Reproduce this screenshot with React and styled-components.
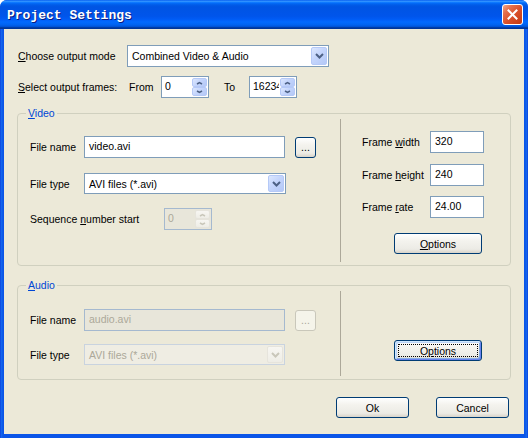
import React from 'react';
import styled, { createGlobalStyle } from 'styled-components';

const Global = createGlobalStyle`
  html, body { margin: 0; padding: 0; background: #ffffff; }
  body { font-family: "Liberation Sans", Arial, sans-serif; font-size: 10.5px; color: #000; }
  * { box-sizing: border-box; }
`;

const Window = styled.div`
  width: 528px;
  height: 438px;
  display: flex;
  flex-direction: column;
  border-radius: 7px 7px 0 0;
  overflow: hidden;
  background: #0A4BDF;
`;

const TitleBar = styled.div`
  height: 29px;
  flex: none;
  display: flex;
  align-items: center;
  justify-content: space-between;
  padding: 1px 5px 0 7px;
  background: linear-gradient(180deg, #0058EE 0%, #3593FF 4%, #288EFF 6%, #127DFF 8%, #036FFC 10%, #0262EE 14%, #0057E5 20%, #0054E3 24%, #0055EB 56%, #005BF5 66%, #026AFE 76%, #0062EF 86%, #0052D6 92%, #0040AB 94%, #003092 100%);
`;

const Title = styled.div`
  font-family: "Liberation Mono", "Courier New", monospace;
  font-weight: bold;
  font-size: 13px;
  color: #ffffff;
  text-shadow: 1px 1px #0A1C80;
`;

const CloseButton = styled.div`
  width: 21px;
  height: 21px;
  margin-top: -1px;
  border: 1px solid #ffffff;
  border-radius: 3px;
  display: flex;
  align-items: center;
  justify-content: center;
  background: linear-gradient(135deg, #F3A88A 0%, #E5704C 25%, #D9502A 55%, #C43A12 100%);
`;

const Frame = styled.div`
  flex: 1;
  display: flex;
  padding: 0 4px 4px;
  background: linear-gradient(90deg, #0831D9 0px, #166AEE 1px, #0A55E8 3px, #0A55E8 calc(100% - 3px), #166AEE calc(100% - 1px), #0831D9 100%);
`;

const Client = styled.div`
  flex: 1;
  display: flex;
  flex-direction: column;
  padding: 16px 13px 0 13px;
  background: #ECE9D8;
`;

const Row = styled.div`
  display: flex;
  align-items: center;
  height: ${p => p.$h || 22}px;
  margin-top: ${p => p.$mt || 0}px;
  padding-left: ${p => p.$pl || 0}px;
`;

const Label = styled.div`
  width: ${p => p.$w}px;
  margin-left: ${p => p.$ml || 0}px;
  flex: none;
  white-space: nowrap;
  color: ${p => (p.$disabled ? '#ACA899' : '#000')};
`;

const U = styled.span`
  text-decoration: underline;
  text-underline-offset: 1px;
`;

const TextField = styled.div`
  width: ${p => p.$w}px;
  height: 22px;
  flex: none;
  padding: 0 3px 2px 4px;
  display: flex;
  align-items: center;
  white-space: nowrap;
  overflow: hidden;
  border: 1px solid ${p => (p.$disabled ? '#A5B9CF' : '#7F9DB9')};
  background: ${p => (p.$disabled ? '#E8E6DA' : '#ffffff')};
  color: ${p => (p.$disabled ? '#ACA899' : '#000')};
`;

const ComboBox = styled.div`
  width: ${p => p.$w}px;
  height: ${p => p.$h || 21}px;
  flex: none;
  display: flex;
  border: 1px solid ${p => (p.$disabled ? '#C9D3DF' : '#7F9DB9')};
  background: ${p => (p.$disabled ? '#EFEDE3' : '#ffffff')};
`;

const ComboText = styled.div`
  flex: 1;
  display: flex;
  align-items: center;
  padding-left: 4px;
  white-space: nowrap;
  color: ${p => (p.$disabled ? '#ACA899' : '#000')};
`;

const DropButton = styled.div`
  width: 16px;
  margin: 1px;
  display: flex;
  align-items: center;
  justify-content: center;
  border-radius: 2px;
  border: 1px solid ${p => (p.$disabled ? '#E6E4DC' : '#B5C9F7')};
  background: ${p => (p.$disabled
    ? 'linear-gradient(180deg, #F7F6F2 0%, #EEEDE6 100%)'
    : 'linear-gradient(135deg, #DCE7FE 0%, #C4D5FC 45%, #B4C8F6 100%)')};
`;

const Spin = styled.div`
  width: ${p => p.$w}px;
  height: 22px;
  flex: none;
  display: flex;
  border: 1px solid ${p => (p.$disabled ? '#A5B9CF' : '#7F9DB9')};
  background: ${p => (p.$disabled ? '#E8E6DA' : '#ffffff')};
`;

const SpinText = styled.div`
  flex: 1;
  min-width: 0;
  overflow: hidden;
  white-space: nowrap;
  padding: 0 0 2px 3px;
  display: flex;
  align-items: center;
  color: ${p => (p.$disabled ? '#ACA899' : '#000')};
`;

const SpinButtons = styled.div`
  width: 15px;
  flex: none;
  margin: 1px;
  display: flex;
  flex-direction: column;
`;

const SpinButton = styled.div`
  flex: 1;
  display: flex;
  align-items: center;
  justify-content: center;
  border-radius: 2px;
  border: 1px solid ${p => (p.$disabled ? '#E6E4DC' : '#B5C9F7')};
  background: ${p => (p.$disabled
    ? 'linear-gradient(180deg, #F7F6F2 0%, #EEEDE6 100%)'
    : 'linear-gradient(135deg, #DCE7FE 0%, #C4D5FC 45%, #B4C8F6 100%)')};
`;

const Button = styled.div`
  width: ${p => p.$w}px;
  height: 21px;
  flex: none;
  margin-left: ${p => p.$ml || 0}px;
  display: flex;
  align-items: center;
  justify-content: center;
  padding: ${p => (p.$focused ? '3px' : '0')};
  border: 1px solid ${p => (p.$disabled ? '#C9C7BA' : '#003C74')};
  border-radius: 3px;
  color: ${p => (p.$disabled ? '#ACA899' : '#000')};
  background: ${p => (p.$disabled
    ? '#F5F4EA'
    : 'linear-gradient(180deg, #FFFFFF 0%, #F4F3EE 35%, #ECEBE5 80%, #D8D3C9 100%)')};
  box-shadow: ${p => (p.$focused
    ? 'inset 1px 1px #CEE7FF, inset -1px -1px #6982EE, inset 2px 2px #BCD4F6, inset -2px -2px #89ADE4'
    : 'none')};
`;

const FocusRect = styled.div`
  flex: 1;
  align-self: stretch;
  display: flex;
  align-items: center;
  justify-content: center;
  outline: 1px dotted #000;
  outline-offset: -1px;
`;

const Group = styled.fieldset`
  margin: ${p => p.$mt}px 0 0;
  padding: 0;
  min-width: 0;
  border: 1px solid #D0D0BF;
  border-radius: 4px;
`;

const Legend = styled.legend`
  margin-left: 8px;
  padding: 0 2px;
  line-height: 12px;
  font-size: 10.5px;
  color: #0046D5;
`;

const GroupBody = styled.div`
  height: ${p => p.$h}px;
  display: grid;
  grid-template-columns: ${p => p.$cols};
`;

const Column = styled.div`
  display: flex;
  flex-direction: column;
  padding: ${p => p.$pad};
`;

const Separator = styled.div`
  margin: 0 0 3px;
  background: #ACA899;
`;

const ActionBar = styled.div`
  display: flex;
  justify-content: flex-end;
  gap: 27px;
  margin-top: 17px;
  padding-right: 2px;
`;

const Chevron = ({ up, color = '#4D6185', w = 9, h = 6, sw = 2 }) => (
  <svg width={w} height={h} viewBox={`0 0 ${w} ${h}`}>
    <polyline
      points={up ? `1,${h - 1} ${w / 2},1.5 ${w - 1},${h - 1}` : `1,1 ${w / 2},${h - 1.5} ${w - 1},1`}
      fill="none"
      stroke={color}
      strokeWidth={sw}
    />
  </svg>
);

const Combo = ({ w, h, value, disabled }) => (
  <ComboBox $w={w} $h={h} $disabled={disabled}>
    <ComboText $disabled={disabled}>{value}</ComboText>
    <DropButton $disabled={disabled}>
      <Chevron color={disabled ? '#C9C7BA' : '#4D6185'} />
    </DropButton>
  </ComboBox>
);

const SpinBox = ({ w, value, disabled }) => (
  <Spin $w={w} $disabled={disabled}>
    <SpinText $disabled={disabled}>{value}</SpinText>
    <SpinButtons>
      <SpinButton $disabled={disabled}>
        <Chevron up w={7} h={4} sw={1.5} color={disabled ? '#C9C7BA' : '#4D6185'} />
      </SpinButton>
      <SpinButton $disabled={disabled}>
        <Chevron w={7} h={4} sw={1.5} color={disabled ? '#C9C7BA' : '#4D6185'} />
      </SpinButton>
    </SpinButtons>
  </Spin>
);

export default function App() {
  return (
    <>
      <Global />
      <Window>
        <TitleBar>
          <Title>Project Settings</Title>
          <CloseButton>
            <svg width="11" height="11" viewBox="0 0 11 11">
              <path d="M1.5 1.5 L9.5 9.5 M9.5 1.5 L1.5 9.5" stroke="#fff" strokeWidth="2" strokeLinecap="square" />
            </svg>
          </CloseButton>
        </TitleBar>
        <Frame>
          <Client>
            <Row $pl={1}>
              <Label $w={109}><U>C</U>hoose output mode</Label>
              <Combo w={202} h={22} value="Combined Video & Audio" />
            </Row>
            <Row $pl={1} $mt={9}>
              <Label $w={111}><U>S</U>elect output frames:</Label>
              <Label $w={32}>From</Label>
              <SpinBox w={48} value="0" />
              <Label $w={25} $ml={15}>To</Label>
              <SpinBox w={48} value="16234" />
            </Row>

            <Group $mt={9}>
              <Legend><U>V</U>ideo</Legend>
              <GroupBody $h={146} $cols="322px 1px 1fr">
                <Column $pad="17px 0 0 12px">
                  <Row>
                    <Label $w={54}>File name</Label>
                    <TextField $w={201}>video.avi</TextField>
                    <Button $w={21} $ml={10}>...</Button>
                  </Row>
                  <Row $mt={15} $h={21}>
                    <Label $w={54}>File type</Label>
                    <Combo w={202} value="AVI files (*.avi)" />
                  </Row>
                  <Row $mt={14}>
                    <Label $w={134}>Sequence <U>n</U>umber start</Label>
                    <SpinBox w={48} value="0" disabled />
                  </Row>
                </Column>
                <Separator />
                <Column $pad="12px 26px 0 21px">
                  <Row>
                    <Label $w={68}>Frame <U>w</U>idth</Label>
                    <TextField $w={54}>320</TextField>
                  </Row>
                  <Row $mt={11}>
                    <Label $w={68}>Frame <U>h</U>eight</Label>
                    <TextField $w={54}>240</TextField>
                  </Row>
                  <Row $mt={10}>
                    <Label $w={68}>Frame <U>r</U>ate</Label>
                    <TextField $w={54}>24.00</TextField>
                  </Row>
                  <Row $mt={15} $h={21} $pl={32}>
                    <Button $w={88}><span><U>O</U>ptions</span></Button>
                  </Row>
                </Column>
              </GroupBody>
            </Group>

            <Group $mt={13}>
              <Legend><U>A</U>udio</Legend>
              <GroupBody $h={88} $cols="322px 1px 1fr">
                <Column $pad="18px 0 0 12px">
                  <Row>
                    <Label $w={54}>File name</Label>
                    <TextField $w={201} $disabled>audio.avi</TextField>
                    <Button $w={21} $ml={10} $disabled>...</Button>
                  </Row>
                  <Row $mt={13} $h={21}>
                    <Label $w={54}>File type</Label>
                    <Combo w={201} value="AVI files (*.avi)" disabled />
                  </Row>
                </Column>
                <Separator />
                <Column $pad="49px 0 0 53px">
                  <Row $h={21}>
                    <Button $w={88} $focused><FocusRect>O<U>p</U>tions</FocusRect></Button>
                  </Row>
                </Column>
              </GroupBody>
            </Group>

            <ActionBar>
              <Button $w={73}>Ok</Button>
              <Button $w={73}>Cancel</Button>
            </ActionBar>
          </Client>
        </Frame>
      </Window>
    </>
  );
}
